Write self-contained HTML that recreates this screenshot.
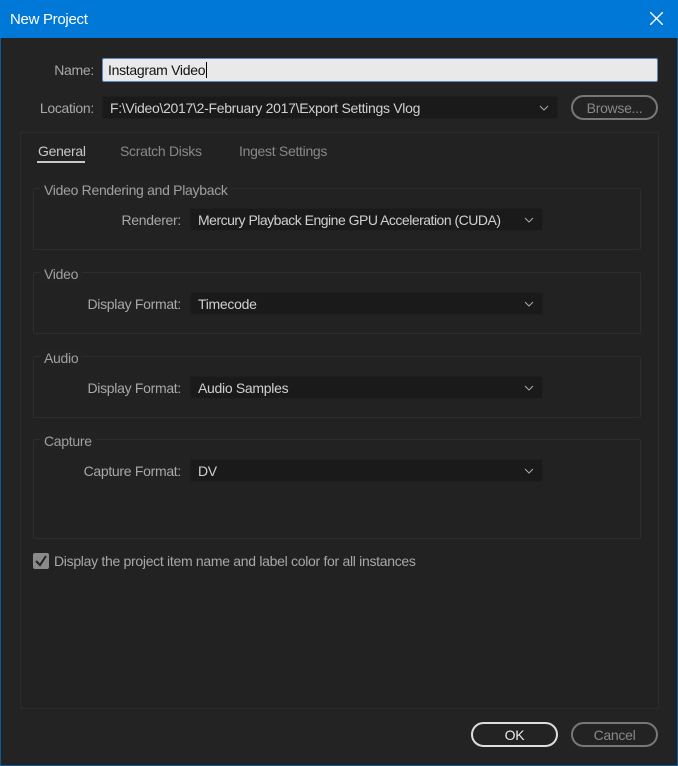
<!DOCTYPE html>
<html><head><style>
*{margin:0;padding:0;box-sizing:border-box}
body{width:678px;height:766px;background:#232323;font-family:"Liberation Sans",sans-serif;font-size:14px;letter-spacing:-0.3px;color:#a8a8a8;position:relative;overflow:hidden}
.a{position:absolute;white-space:nowrap}
.title{left:0;top:0;width:678px;height:38px;background:#0078d7;color:#fff;font-size:15px;padding:11px 10px}
.lbl{text-align:right}
.dd{background:#1a1a1a;border:1px solid #1f1f1f;color:#d0d0d0;padding:3px 7px;height:23px}
.dd svg{position:absolute;right:8px;top:8px}
.grp{border:1px solid #2d2d2d;border-radius:2px}
.gl{background:#232323;padding:0 4px;color:#a0a0a0}
.btn{border:2px solid #777;border-radius:13px;text-align:center;color:#888;padding-top:3px}
</style></head><body>
<div class="a" style="left:0;top:0;width:678px;height:766px;border:1px solid #0a5a9c"></div>
<div class="a title">New Project<svg style="position:absolute;right:15px;top:12px" width="13" height="13"><path d="M0 0L13 13M13 0L0 13" stroke="#fff" stroke-width="1.4"/></svg></div>
<div class="a lbl" style="right:584px;top:62px">Name:</div>
<div class="a" style="left:102px;top:58px;width:556px;height:24px;background:#e9e9e9;border:1px solid #5a8ac0;border-radius:2px;color:#111;padding:3px 5px">Instagram Video<span style="border-left:1px solid #000;margin-left:1px"></span></div>
<div class="a lbl" style="right:584px;top:100px">Location:</div>
<div class="a dd" style="left:102px;top:96px;width:456px">F:\Video\2017\2-February 2017\Export Settings Vlog<svg width="10" height="6"><path d="M1 1L5 5L9 1" stroke="#aaa" fill="none"/></svg></div>
<div class="a btn" style="left:571px;top:95px;width:87px;height:25px">Browse...</div>
<div class="a" style="left:20px;top:132px;width:639px;height:577px;border:1px solid #2b2b2b;background:#222"></div>
<div class="a" style="left:38px;top:143px;color:#c8c8c8">General</div>
<div class="a" style="left:37px;top:161px;width:48px;height:2px;background:#c8c8c8"></div>
<div class="a" style="left:120px;top:143px;color:#888">Scratch Disks</div>
<div class="a" style="left:239px;top:143px;color:#888">Ingest Settings</div>

<div class="a grp" style="left:33px;top:188px;width:608px;height:62px"></div>
<div class="a gl" style="left:40px;top:182px">Video Rendering and Playback</div>
<div class="a lbl" style="right:497px;top:212px">Renderer:</div>
<div class="a dd" style="left:190px;top:208px;width:353px;letter-spacing:-0.5px">Mercury Playback Engine GPU Acceleration (CUDA)<svg width="10" height="6"><path d="M1 1L5 5L9 1" stroke="#aaa" fill="none"/></svg></div>

<div class="a grp" style="left:33px;top:272px;width:608px;height:62px"></div>
<div class="a gl" style="left:40px;top:266px">Video</div>
<div class="a lbl" style="right:497px;top:296px">Display Format:</div>
<div class="a dd" style="left:190px;top:292px;width:353px">Timecode<svg width="10" height="6"><path d="M1 1L5 5L9 1" stroke="#aaa" fill="none"/></svg></div>

<div class="a grp" style="left:33px;top:356px;width:608px;height:62px"></div>
<div class="a gl" style="left:40px;top:350px">Audio</div>
<div class="a lbl" style="right:497px;top:380px">Display Format:</div>
<div class="a dd" style="left:190px;top:376px;width:353px">Audio Samples<svg width="10" height="6"><path d="M1 1L5 5L9 1" stroke="#aaa" fill="none"/></svg></div>

<div class="a grp" style="left:33px;top:439px;width:608px;height:100px"></div>
<div class="a gl" style="left:40px;top:433px">Capture</div>
<div class="a lbl" style="right:497px;top:463px">Capture Format:</div>
<div class="a dd" style="left:190px;top:459px;width:353px">DV<svg width="10" height="6"><path d="M1 1L5 5L9 1" stroke="#aaa" fill="none"/></svg></div>

<div class="a" style="left:33px;top:553px;width:16px;height:16px;background:#8a8a8a;border-radius:2px"><svg width="16" height="16"><path d="M3 8L7 12L13 3" stroke="#222" stroke-width="2" fill="none"/></svg></div>
<div class="a" style="left:54px;top:553px">Display the project item name and label color for all instances</div>

<div class="a btn" style="left:471px;top:722px;width:87px;height:25px;border-color:#ddd;color:#e8e8e8">OK</div>
<div class="a btn" style="left:571px;top:722px;width:87px;height:25px">Cancel</div>
</body></html>
